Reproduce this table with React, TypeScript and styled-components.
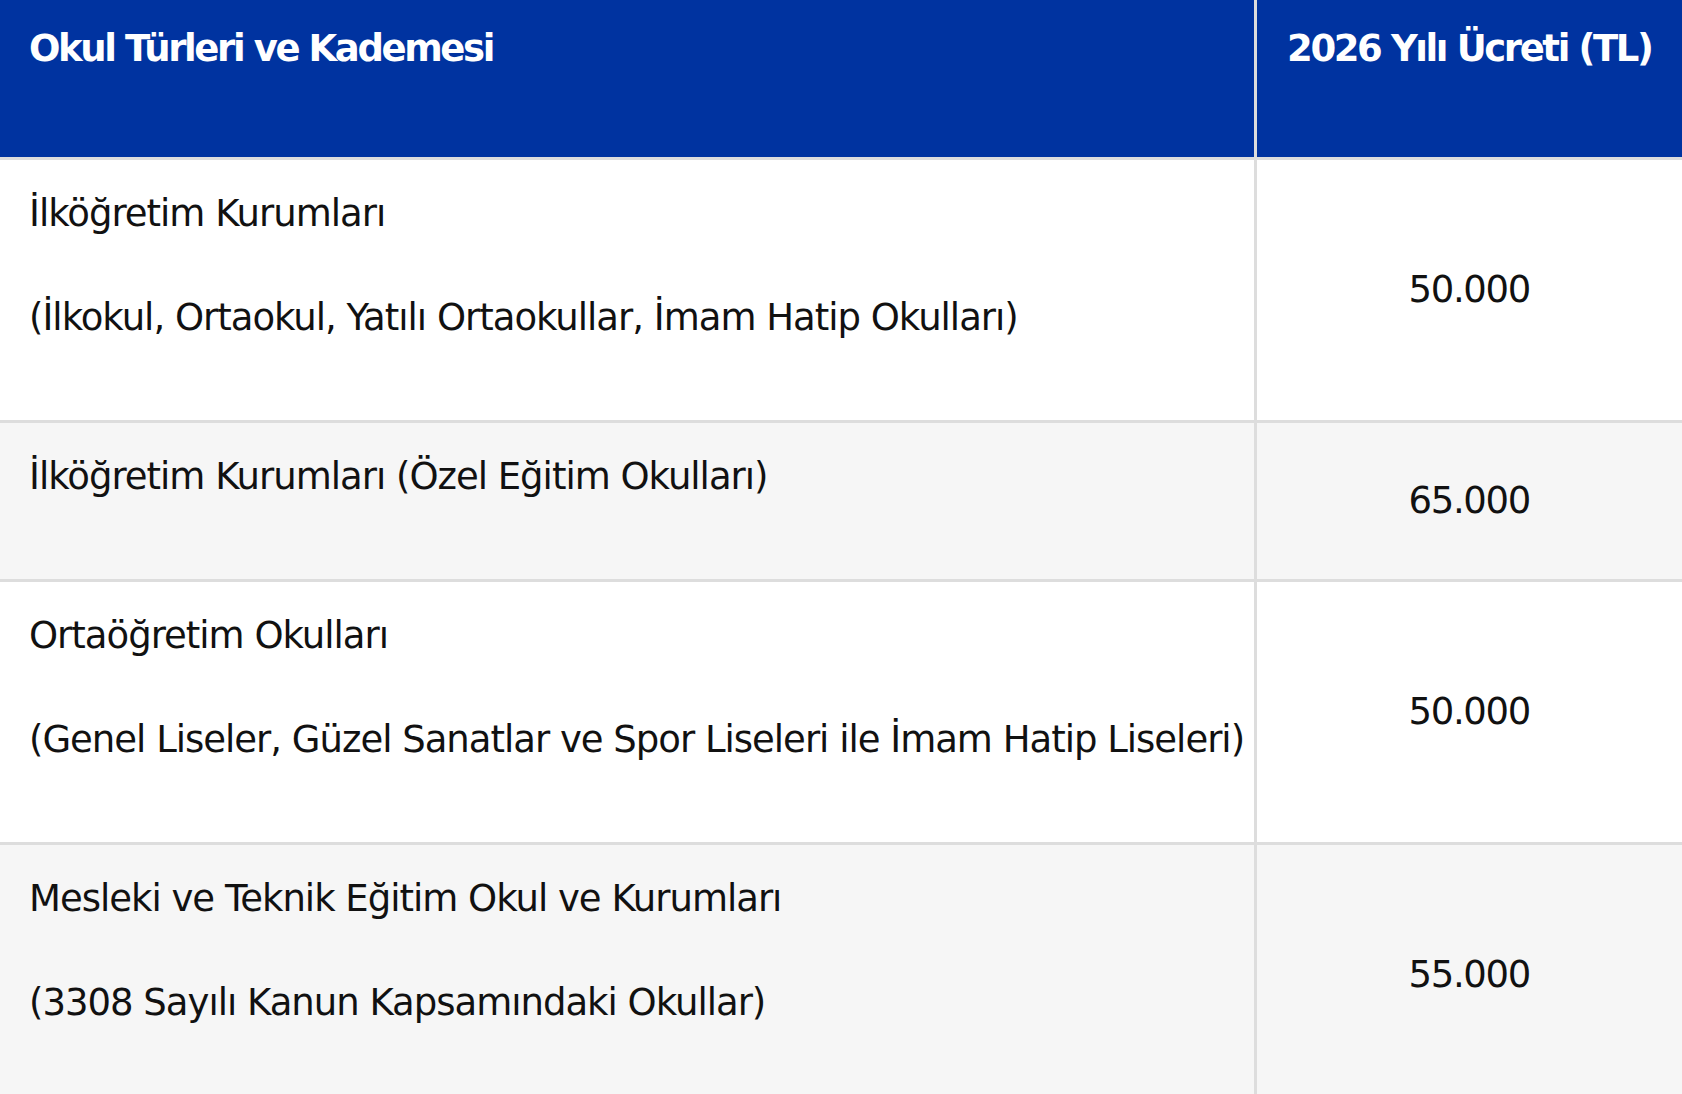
import React from 'react'
import styled, { createGlobalStyle } from 'styled-components'

const GlobalStyle = createGlobalStyle`
  html, body {
    margin: 0;
    padding: 0;
    background: #ffffff;
  }
  body {
    font-family: "DejaVu Sans", Verdana, sans-serif;
    color: #111;
    overflow: hidden;
  }
`

const Table = styled.table`
  width: 1682px;
  border-collapse: collapse;
  table-layout: fixed;
  font-family: "DejaVu Sans", Verdana, sans-serif;
  font-size: 37px;
  line-height: 54px;

  th, td {
    box-sizing: border-box;
  }
`

const NameCol = styled.col`
  width: 1255px;
`

const PriceCol = styled.col`
  width: 427px;
`

const HeadCell = styled.th<{ $price?: boolean }>`
  background-color: #0033a0;
  color: #ffffff;
  font-weight: bold;
  letter-spacing: -2.4px;
  text-align: ${p => (p.$price ? 'center' : 'left')};
  vertical-align: top;
  padding: 22px ${p => (p.$price ? '4px' : '29px')} 81px;
  border-left: ${p => (p.$price ? '3px solid #dddddd' : 'none')};
  border-bottom: 3px solid #dddddd;
  white-space: nowrap;
`

const Row = styled.tr<{ $alt?: boolean }>`
  background-color: ${p => (p.$alt ? '#f6f6f6' : '#ffffff')};
  border-top: 3px solid #dddddd;
`

const TextCell = styled.td`
  padding: 27px 29px 25px;
  vertical-align: top;
  letter-spacing: -1px;

  p {
    margin: 0 0 50px;
    white-space: nowrap;
  }
`

const PriceCell = styled.td`
  border-left: 3px solid #dddddd;
  text-align: center;
  vertical-align: middle;
  letter-spacing: -1.3px;
  padding: 0 10px;
`

interface FeeRow {
  lines: string[]
  price: string
}

const rows: FeeRow[] = [
  {
    lines: ['İlköğretim Kurumları', '(İlkokul, Ortaokul, Yatılı Ortaokullar, İmam Hatip Okulları)'],
    price: '50.000'
  },
  {
    lines: ['İlköğretim Kurumları (Özel Eğitim Okulları)'],
    price: '65.000'
  },
  {
    lines: ['Ortaöğretim Okulları', '(Genel Liseler, Güzel Sanatlar ve Spor Liseleri ile İmam Hatip Liseleri)'],
    price: '50.000'
  },
  {
    lines: ['Mesleki ve Teknik Eğitim Okul ve Kurumları', '(3308 Sayılı Kanun Kapsamındaki Okullar)'],
    price: '55.000'
  }
]

const App: React.FC = () => {
  return (
    <>
      <GlobalStyle />
      <Table>
        <colgroup>
          <NameCol />
          <PriceCol />
        </colgroup>
        <thead>
          <tr>
            <HeadCell>Okul Türleri ve Kademesi</HeadCell>
            <HeadCell $price>2026 Yılı Ücreti (TL)</HeadCell>
          </tr>
        </thead>
        <tbody>
          {rows.map((row, i) => (
            <Row key={i} $alt={i % 2 === 1}>
              <TextCell>
                {row.lines.map((line, j) => (
                  <p key={j}>{line}</p>
                ))}
              </TextCell>
              <PriceCell>{row.price}</PriceCell>
            </Row>
          ))}
        </tbody>
      </Table>
    </>
  )
}

export default App
